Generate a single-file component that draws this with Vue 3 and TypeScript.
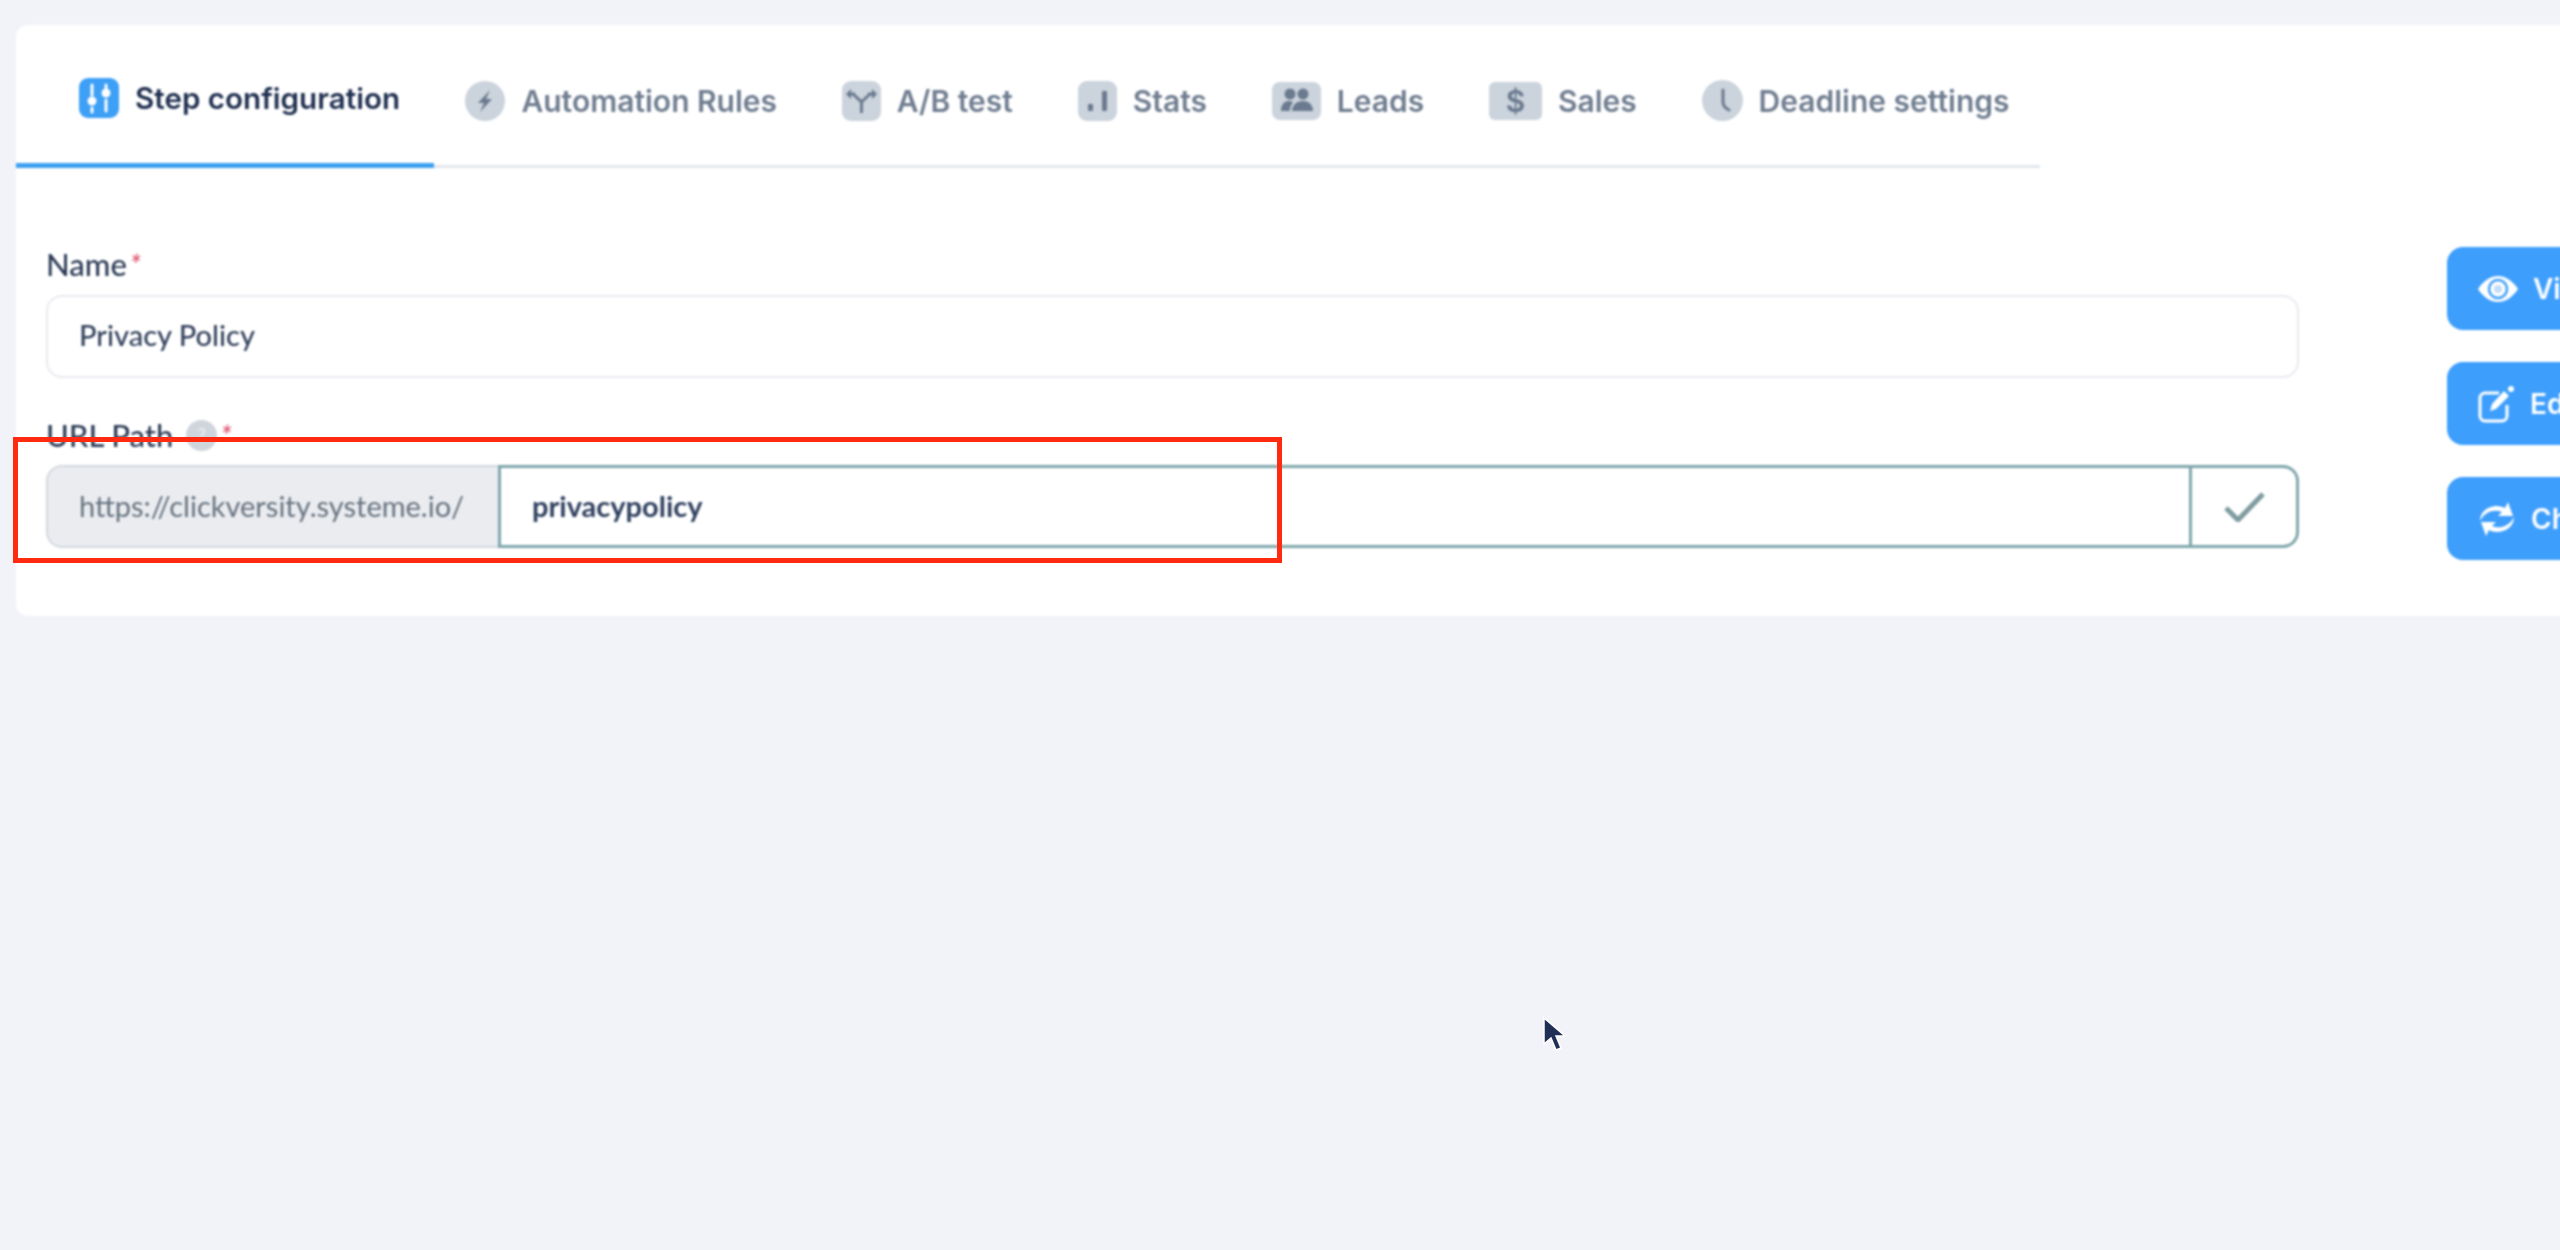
<template>
  <div class="page">
    <div class="card">
      <nav class="tabs">
        <a class="tab active">
          <svg class="icon" width="40" height="40" viewBox="0 0 40 40">
            <rect width="40" height="40" rx="9" fill="#3d9ff5" />
            <path d="M13 7v10M13 30v4M27 7v3M27 22v11" stroke="#fff" stroke-width="3" stroke-linecap="round" />
            <circle cx="13" cy="23" r="4.5" fill="#fff" />
            <circle cx="27" cy="15" r="4.5" fill="#fff" />
          </svg>
          <span>Step configuration</span>
        </a>
        <a class="tab">
          <svg class="icon" width="40" height="40" viewBox="0 0 40 40">
            <circle cx="20" cy="20" r="20" fill="#cbd3dc" />
            <path d="M25 9 13 22h6l-4 9 12-13h-6z" fill="#6b7a8f" />
          </svg>
          <span>Automation Rules</span>
        </a>
        <a class="tab">
          <svg class="icon" width="39" height="40" viewBox="0 0 39 40">
            <rect width="39" height="40" rx="9" fill="#cbd3dc" />
            <path d="M19.5 32V21L11 13M19.5 21 28 13M6 13h7M26 13h7" fill="none" stroke="#6b7a8f" stroke-width="3" />
            <path d="M4 13l5-5v10zM35 13l-5-5v10z" fill="#6b7a8f" />
          </svg>
          <span>A/B test</span>
        </a>
        <a class="tab">
          <svg class="icon" width="39" height="40" viewBox="0 0 39 40">
            <rect width="39" height="40" rx="9" fill="#cbd3dc" />
            <rect x="10" y="23" width="5" height="7" rx="1" fill="#6b7a8f" />
            <rect x="24" y="10" width="5" height="20" rx="1" fill="#6b7a8f" />
          </svg>
          <span>Stats</span>
        </a>
        <a class="tab">
          <svg class="icon" width="49" height="38" viewBox="0 0 49 38">
            <rect width="49" height="38" rx="8" fill="#cbd3dc" />
            <circle cx="18" cy="12" r="5.5" fill="#6b7a8f" />
            <circle cx="31" cy="12" r="5.500" fill="#6b7a8f" />
            <path d="M9 29c0-6 3-10 8-10 2 0 3 .6 4 1.500-2 2-3 5-3.400 8.500zM20 29c0-6 5-10 11-10s10 4 10 10z" fill="#6b7a8f" />
          </svg>
          <span>Leads</span>
        </a>
        <a class="tab">
          <span class="icon dollar">$</span>
          <span>Sales</span>
        </a>
        <a class="tab">
          <svg class="icon" width="41" height="41" viewBox="0 0 41 41">
            <circle cx="20.500" cy="20.500" r="20.500" fill="#cbd3dc" />
            <path d="M21 10v12c0 3 2 6 6 8" fill="none" stroke="#6b7a8f" stroke-width="3" stroke-linecap="round" />
          </svg>
          <span>Deadline settings</span>
        </a>
      </nav>

      <div class="content">
        <form class="form">
          <label class="label">Name<i class="req">*</i></label>
          <div class="input">Privacy Policy</div>

          <label class="label url-label">
            URL Path
            <span class="help">?</span>
            <i class="req">*</i>
          </label>
          <div class="url-group">
            <div class="prefix">https://clickversity.systeme.io/</div>
            <div class="slug">privacypolicy</div>
            <div class="confirm">
              <svg width="41" height="30" viewBox="0 0 41 30">
                <path d="M2 16l12 12L39 2" fill="none" stroke="#7f9ca0" stroke-width="5" />
              </svg>
            </div>
          </div>
        </form>

        <div class="actions">
          <button class="action" type="button">
            <svg width="40" height="28" viewBox="0 0 40 28">
              <path d="M0 14C6 5 13 1 20 1s14 4 20 13c-6 9-13 13-20 13S6 23 0 14z" fill="#fff" />
              <circle cx="20" cy="14" r="9" fill="none" stroke="#3d9efc" stroke-width="2.500" />
              <circle cx="20" cy="14" r="4" fill="#c4ddf6" />
            </svg>
            View
          </button>
          <button class="action" type="button">
            <svg width="37" height="38" viewBox="0 0 37 38">
              <path d="M21 8H7a5 5 0 0 0-5 5v18a5 5 0 0 0 5 5h17a5 5 0 0 0 5-5V20" fill="none" stroke="#fff" stroke-width="3" />
              <path d="M12 26l2-7L26 6l5 5-13 13z" fill="#fff" />
              <circle cx="33" cy="4" r="3" fill="#fff" />
            </svg>
            Edit
          </button>
          <button class="action" type="button">
            <svg width="38" height="36" viewBox="0 0 38 36">
              <path d="M2 20C2 10 11 5 19 5c3 0 6 1 8 2l3-6 5 14-15 0 4-4C17 8 7 10 2 20z" fill="#fff" />
              <path d="M2 20C2 10 11 5 19 5c3 0 6 1 8 2l3-6 5 14-15 0 4-4C17 8 7 10 2 20z" fill="#fff" transform="rotate(180 19 18)" />
            </svg>
            Change
          </button>
        </div>
      </div>
    </div>

    <!-- red annotation drawn over the URL field -->
    <div class="highlight"></div>

    <svg class="cursor" width="24" height="36" viewBox="0 0 24 36">
      <path d="M2 1v26l7-6 5 12 5-2-5-12h9z" fill="#1f2f55" stroke="#fff" stroke-width="1.500" />
    </svg>
  </div>
</template>

<script setup lang="ts">
</script>

<style>
html,
body {
  margin: 0;
  overflow: hidden;
  background: #f1f3f8;
}
</style>

<style scoped>
.page {
  position: relative;
  box-sizing: border-box;
  width: 2560px;
  height: 1250px;
  padding: 25px 0 0 16px;
  overflow: hidden;
  font-family: Inter, "Liberation Sans", sans-serif;
}

.card {
  box-sizing: border-box;
  width: 2600px;
  height: 591px;
  background: #fff;
  border-radius: 12px;
  filter: blur(0.8px);
}

/* Tabs */
.tabs {
  display: flex;
  box-sizing: border-box;
  width: 2024px;
  height: 143px;
  border-bottom: 3px solid #e3e7ec;
}

.tab {
  display: flex;
  align-items: center;
  gap: 16px;
  box-sizing: border-box;
  height: 143px;
  padding: 8px 32.4px 0;
  margin-bottom: -3px;
  font-size: 30px;
  font-weight: 600;
  color: #6f7d90;
  white-space: nowrap;
}

.tab.active {
  padding-top: 7px;
  padding-left: 63px;
  padding-right: 34px;
  margin-right: -1px;
  font-size: 29.6px;
  color: #1f2f4f;
  border-bottom: 5px solid #3d9ff0;
}

.icon {
  flex: none;
}

.dollar {
  display: flex;
  align-items: center;
  justify-content: center;
  width: 53px;
  height: 38px;
  border-radius: 6px;
  background: #cbd3dc;
  color: #6b7a8f;
  font-size: 30px;
}

/* Form */
.content {
  display: flex;
  align-items: flex-start;
  padding: 76px 0 0 30px;
}

.form {
  flex: none;
  width: 2253px;
}

.label {
  display: flex;
  align-items: center;
  height: 40px;
  margin-bottom: 11px;
  font-family: Lato, sans-serif;
  font-size: 31px;
  font-weight: 500;
  color: #2b3a55;
}

.url-label {
  margin-top: 37px;
  margin-bottom: 10px;
}

.req {
  align-self: flex-start;
  margin: 3px 0 0 3px;
  font-size: 28px;
  color: #e0536e;
}

.help {
  display: flex;
  align-items: center;
  justify-content: center;
  width: 31px;
  height: 31px;
  margin-left: 13px;
  border-radius: 50%;
  background: #cfd5dc;
  color: #e9ecf0;
  font-size: 18px;
  font-weight: 700;
}

.input {
  display: flex;
  align-items: center;
  box-sizing: border-box;
  height: 83px;
  padding: 0 0 4px 31px;
  border: 2px solid #e8eaf0;
  border-radius: 16px;
  font-family: Lato, sans-serif;
  font-size: 29px;
  font-weight: 500;
  color: #33415c;
}

.url-group {
  display: flex;
  height: 83px;
  font-family: Lato, sans-serif;
  font-size: 29px;
}

.url-group > div {
  display: flex;
  align-items: center;
  box-sizing: border-box;
}

.prefix {
  flex: none;
  width: 452px;
  padding: 0 0 2px 31px;
  background: #eaecf0;
  border: 2px solid #d3d8df;
  border-right: 0;
  border-radius: 16px 0 0 16px;
  color: #66727f;
}

.slug {
  flex: 1;
  padding: 0 0 2px 31px;
  border: 3px solid #7fa6ab;
  font-weight: 700;
  color: #2f3f5f;
}

.confirm {
  flex: none;
  justify-content: center;
  width: 107px;
  border: 3px solid #7fa6ab;
  border-left: 0;
  border-radius: 0 16px 16px 0;
}

.highlight {
  position: absolute;
  left: 13px;
  top: 437px;
  box-sizing: border-box;
  width: 1269px;
  height: 126px;
  border: 5px solid #ff2a0f;
}

/* Side buttons, cut off by the window edge */
.actions {
  display: flex;
  flex-direction: column;
  gap: 32px;
  flex: none;
  margin: 3px 0 0 148px;
}

.action {
  display: flex;
  align-items: center;
  gap: 15px;
  width: 260px;
  height: 83px;
  padding: 0 0 0 31px;
  border: 0;
  border-radius: 16px;
  background: #3d9efc;
  color: #fff;
  font-family: Inter, sans-serif;
  font-size: 28px;
  font-weight: 600;
}

.cursor {
  position: absolute;
  left: 1542px;
  top: 1017px;
  filter: blur(0.6px);
}
</style>
